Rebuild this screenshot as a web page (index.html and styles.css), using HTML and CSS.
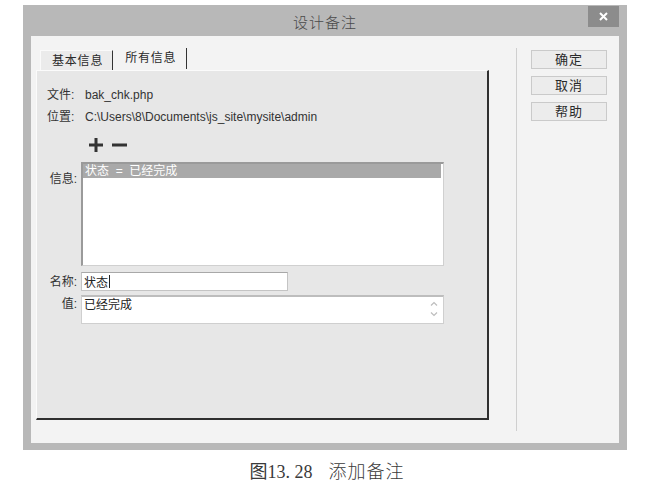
FILE: index.html
```html
<!DOCTYPE html>
<html lang="zh-CN">
<head>
<meta charset="utf-8">
<title>设计备注</title>
<link rel="stylesheet" href="styles.css">
</head>
<body>
<div class="page">
  <div class="window">
    <div class="titlebar">
      <span></span>
      <span class="title">设计备注</span>
      <span class="close">
        <svg width="9" height="9" viewBox="0 0 9 9"><path d="M1 1 L8 8 M8 1 L1 8" stroke="#fff" stroke-width="2" fill="none"/></svg>
      </span>
    </div>
    <div class="client">
      <div class="left">
        <div class="tabs">
          <div class="tab active">基本信息</div>
          <div class="tab">所有信息</div>
        </div>
        <div class="panel">
          <div class="info">
            <span>文件:</span><span>bak_chk.php</span>
            <span>位置:</span><span>C:\Users\8\Documents\js_site\mysite\admin</span>
          </div>
          <div class="tools">
            <svg class="plus" width="14" height="14" viewBox="0 0 14 14"><path d="M5.5 0 H8.5 V5.5 H14 V8.5 H8.5 V14 H5.5 V8.5 H0 V5.5 H5.5 Z" fill="#333"/></svg>
            <svg class="minus" width="15" height="14" viewBox="0 0 15 14"><rect x="0" y="5.5" width="15" height="3" fill="#333"/></svg>
          </div>
          <div class="form">
            <span class="lbl lbl-info">信息:</span>
            <div class="list">
              <div class="item sel">状态&nbsp; =&nbsp; 已经完成</div>
            </div>
            <span class="lbl lbl-name">名称:</span>
            <div class="namebox"><span>状态</span><span class="caret"></span></div>
            <span class="lbl lbl-val">值:</span>
            <div class="valbox">
              <span class="valtext">已经完成</span>
              <span class="arrows">
                <svg width="8" height="5" viewBox="0 0 8 5"><path d="M1 4.5 L4 1.5 L7 4.5" stroke="#bdbdbd" stroke-width="1.2" fill="none"/></svg>
                <svg width="8" height="5" viewBox="0 0 8 5"><path d="M1 0.5 L4 3.5 L7 0.5" stroke="#bdbdbd" stroke-width="1.2" fill="none"/></svg>
              </span>
            </div>
          </div>
        </div>
      </div>
      <div class="sep"></div>
      <div class="buttons">
        <div class="btn">确定</div>
        <div class="btn">取消</div>
        <div class="btn">帮助</div>
      </div>
    </div>
  </div>
  <div class="caption"><span class="fig">图13. 28</span><span class="cap-title">添加备注</span></div>
</div>
</body>
</html>
```

FILE: styles.css
```css
html, body {
  margin: 0;
  padding: 0;
  background: #ffffff;
}

body {
  font-family: "Liberation Sans", "Noto Sans CJK SC", sans-serif;
  font-size: 12px;
  color: #333333;
}

.page {
  width: 646px;
  height: 489px;
  padding-top: 5px;
  box-sizing: border-box;
}

.window {
  margin-left: 23px;
  width: 604px;
  box-sizing: border-box;
  background: #b8b8b8;
  padding: 0 8px 7px 8px;
}

.titlebar {
  height: 31px;
  display: grid;
  grid-template-columns: 1fr auto 1fr;
  align-items: start;
}

.title {
  font-family: "Noto Sans CJK SC", sans-serif;
  font-weight: 300;
  font-size: 15px;
  line-height: 17px;
  letter-spacing: 1px;
  color: #4a4a4a;
  margin-top: 8px;
}

.close {
  justify-self: end;
  margin-top: 1px;
  width: 31px;
  height: 21px;
  background: #8c8c8c;
  display: flex;
  align-items: center;
  justify-content: center;
}

.close svg {
  display: block;
}

.client {
  height: 407px;
  background: #f3f3f3;
  display: flex;
  align-items: flex-start;
  padding: 12px 0 0 5px;
  box-sizing: border-box;
}

.left {
  width: 453px;
}

.tabs {
  height: 22px;
  display: flex;
  align-items: flex-end;
  padding-left: 4px;
}

.tab {
  height: 20px;
  box-sizing: border-box;
  line-height: 20px;
  padding: 0 9px 0 11px;
  letter-spacing: 0.8px;
  color: #2a2a2a;
  border-right: 1px solid #333;
}

.tab.active {
  background: #ebebeb;
  border-left: 1px solid #fafafa;
  border-top: 1px solid #fafafa;
}

.tab + .tab {
  height: 21px;
  margin-bottom: 1px;
  padding: 0 10px 0 12px;
}

.panel {
  height: 350px;
  box-sizing: border-box;
  background: #e7e7e7;
  border-left: 1px solid #fbfbfb;
  border-top: 1px solid #fbfbfb;
  border-right: 2px solid #2f2f2f;
  border-bottom: 2px solid #2f2f2f;
  padding: 13px 0 0 10px;
}

.info {
  display: grid;
  grid-template-columns: 38px auto;
  grid-auto-rows: 22px;
  line-height: 22px;
  color: #333;
}

.tools {
  display: flex;
  align-items: center;
  padding-left: 42px;
  margin-top: 10px;
  height: 14px;
  gap: 9px;
}

.tools svg {
  display: block;
}

.form {
  margin-top: 10px;
  display: grid;
  grid-template-columns: 34px auto;
  grid-template-rows: 104px 19px 29px;
  row-gap: 5px;
  align-items: start;
}

.form .namebox {
  margin-top: 1px;
}

.lbl {
  text-align: right;
  padding-right: 4px;
  color: #333;
  line-height: 16px;
}

.lbl-info {
  padding-top: 9px;
}

.lbl-name {
  padding-top: 3px;
}

.lbl-val {
  padding-top: 1px;
}

.list {
  width: 363px;
  height: 104px;
  box-sizing: border-box;
  background: #ffffff;
  border-top: 2px solid #9a9a9a;
  border-left: 2px solid #9a9a9a;
  border-right: 1px solid #d0d0d0;
  border-bottom: 1px solid #d0d0d0;
  padding: 0 2px 0 0;
}

.item {
  height: 14px;
  line-height: 14px;
  padding-left: 2px;
}

.item.sel {
  background: #a9a9a9;
  color: #ffffff;
}

.namebox {
  width: 207px;
  height: 19px;
  box-sizing: border-box;
  background: #ffffff;
  border: 1px solid #c4c4c4;
  border-top-color: #a8a8a8;
  display: flex;
  align-items: center;
  padding-left: 2px;
  color: #222;
}

.caret {
  width: 1px;
  height: 13px;
  background: #222;
  margin-left: 1px;
}

.valbox {
  width: 363px;
  height: 29px;
  box-sizing: border-box;
  background: #ffffff;
  border: 1px solid #cfcfcf;
  border-top: 2px solid #bdbdbd;
  display: flex;
  align-items: flex-start;
  padding-left: 2px;
  color: #222;
}

.valtext {
  flex: 1;
  line-height: 16px;
}

.arrows {
  display: flex;
  flex-direction: column;
  gap: 6px;
  padding: 4px 5px 0 0;
}

.arrows svg {
  display: block;
}

.sep {
  margin-left: 27px;
  width: 1px;
  height: 383px;
  background: #cfcfcf;
}

.buttons {
  margin-left: 14px;
  padding-top: 2px;
  display: flex;
  flex-direction: column;
  gap: 7px;
}

.btn {
  width: 76px;
  height: 19px;
  box-sizing: border-box;
  background: #ececec;
  border: 1px solid #cacaca;
  text-align: center;
  line-height: 17px;
  font-size: 13px;
  letter-spacing: 1px;
  color: #2a2a2a;
}

.caption {
  margin-top: 9px;
  text-align: center;
  padding-left: 8px;
  font-size: 18px;
  line-height: 22px;
  color: #3a3a3a;
}

.fig {
  font-family: "Liberation Serif", "Noto Sans CJK SC", serif;
}

.cap-title {
  font-family: "Noto Sans CJK SC", serif;
  font-weight: 300;
  margin-left: 16px;
  letter-spacing: 1px;
}
```
